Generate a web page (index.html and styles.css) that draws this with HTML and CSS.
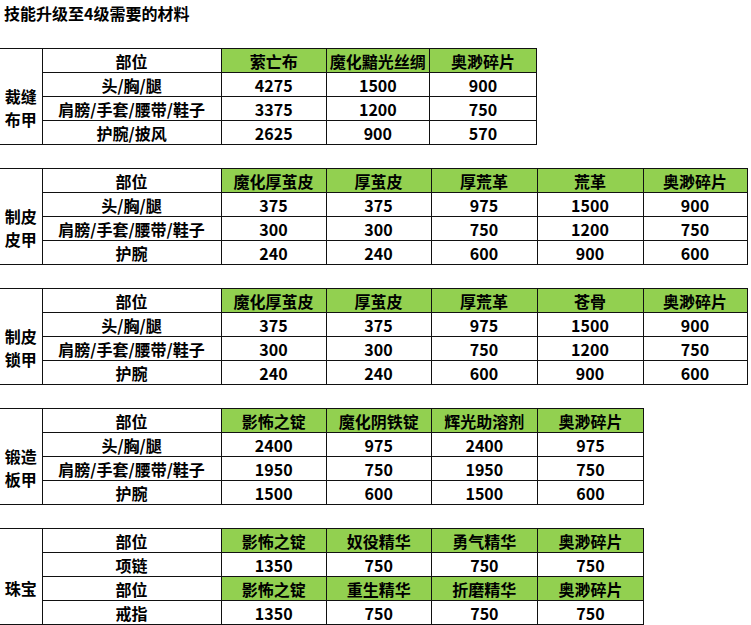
FILE: index.html
```html
<!DOCTYPE html>
<html lang="zh">
<head>
<meta charset="utf-8">
<title>技能升级至4级需要的材料</title>
<link rel="stylesheet" href="styles.css">
</head>
<body>
<div class="sheet">
  <div class="title">技能升级至4级需要的材料</div>

  <table class="grid w3">
    <colgroup><col class="c-lab"><col class="c-part"><col class="c-a"><col class="c-b"><col class="c-c"></colgroup>
    <tr><td class="corner"></td><th>部位</th><th class="mat">萦亡布</th><th class="mat">魔化黯光丝绸</th><th class="mat">奥渺碎片</th></tr>
    <tr><td class="lab" rowspan="3">裁缝<br>布甲</td><td>头/胸/腿</td><td>4275</td><td>1500</td><td>900</td></tr>
    <tr><td>肩膀/手套/腰带/鞋子</td><td>3375</td><td>1200</td><td>750</td></tr>
    <tr><td>护腕/披风</td><td>2625</td><td>900</td><td>570</td></tr>
  </table>

  <table class="grid w5">
    <colgroup><col class="c-lab"><col class="c-part"><col class="c-m"><col class="c-m"><col class="c-m2"><col class="c-m2"><col class="c-last"></colgroup>
    <tr><td class="corner"></td><th>部位</th><th class="mat">魔化厚茧皮</th><th class="mat">厚茧皮</th><th class="mat">厚荒革</th><th class="mat">荒革</th><th class="mat">奥渺碎片</th></tr>
    <tr><td class="lab" rowspan="3">制皮<br>皮甲</td><td>头/胸/腿</td><td>375</td><td>375</td><td>975</td><td>1500</td><td>900</td></tr>
    <tr><td>肩膀/手套/腰带/鞋子</td><td>300</td><td>300</td><td>750</td><td>1200</td><td>750</td></tr>
    <tr><td>护腕</td><td>240</td><td>240</td><td>600</td><td>900</td><td>600</td></tr>
  </table>

  <table class="grid w5">
    <colgroup><col class="c-lab"><col class="c-part"><col class="c-m"><col class="c-m"><col class="c-m2"><col class="c-m2"><col class="c-last"></colgroup>
    <tr><td class="corner"></td><th>部位</th><th class="mat">魔化厚茧皮</th><th class="mat">厚茧皮</th><th class="mat">厚荒革</th><th class="mat">苍骨</th><th class="mat">奥渺碎片</th></tr>
    <tr><td class="lab" rowspan="3">制皮<br>锁甲</td><td>头/胸/腿</td><td>375</td><td>375</td><td>975</td><td>1500</td><td>900</td></tr>
    <tr><td>肩膀/手套/腰带/鞋子</td><td>300</td><td>300</td><td>750</td><td>1200</td><td>750</td></tr>
    <tr><td>护腕</td><td>240</td><td>240</td><td>600</td><td>900</td><td>600</td></tr>
  </table>

  <table class="grid w4">
    <colgroup><col class="c-lab"><col class="c-part"><col class="c-m"><col class="c-m"><col class="c-m2"><col class="c-m2"></colgroup>
    <tr><td class="corner"></td><th>部位</th><th class="mat">影怖之锭</th><th class="mat">魔化阴铁锭</th><th class="mat">辉光助溶剂</th><th class="mat">奥渺碎片</th></tr>
    <tr><td class="lab" rowspan="3">锻造<br>板甲</td><td>头/胸/腿</td><td>2400</td><td>975</td><td>2400</td><td>975</td></tr>
    <tr><td>肩膀/手套/腰带/鞋子</td><td>1950</td><td>750</td><td>1950</td><td>750</td></tr>
    <tr><td>护腕</td><td>1500</td><td>600</td><td>1500</td><td>600</td></tr>
  </table>

  <table class="grid w4">
    <colgroup><col class="c-lab"><col class="c-part"><col class="c-m"><col class="c-m"><col class="c-m2"><col class="c-m2"></colgroup>
    <tr><td class="corner"></td><th>部位</th><th class="mat">影怖之锭</th><th class="mat">奴役精华</th><th class="mat">勇气精华</th><th class="mat">奥渺碎片</th></tr>
    <tr><td class="lab" rowspan="3">珠宝</td><td>项链</td><td>1350</td><td>750</td><td>750</td><td>750</td></tr>
    <tr><th>部位</th><th class="mat">影怖之锭</th><th class="mat">重生精华</th><th class="mat">折磨精华</th><th class="mat">奥渺碎片</th></tr>
    <tr><td>戒指</td><td>1350</td><td>750</td><td>750</td><td>750</td></tr>
  </table>
</div>
</body>
</html>
```

FILE: styles.css
```css
html, body {
  margin: 0;
  padding: 0;
  background: #ffffff;
}

.sheet {
  display: flex;
  flex-direction: column;
  font-family: "Noto Sans CJK SC", "Microsoft YaHei", sans-serif;
  font-weight: 700;
  font-size: 16px;
  color: #000000;
}

.title {
  height: 24px;
  line-height: 24px;
  padding-left: 4px;
  margin-top: 1px;
}

.grid {
  border-collapse: collapse;
  table-layout: fixed;
  margin-top: 23px;
}

.w3 { width: 537px; }
.w5 { width: 747px; }
.w4 { width: 644px; }

.c-lab { width: 42px; }
.c-part { width: 179px; }
.c-a { width: 105px; }
.c-b { width: 103px; }
.c-c { width: 107px; }
.c-m { width: 105px; }
.c-m2 { width: 106px; }
.c-last { width: 104px; }

.grid td,
.grid th {
  height: 23px;
  padding: 0;
  border: 1px solid #111111;
  text-align: center;
  vertical-align: middle;
  line-height: 22px;
  font-weight: 700;
  white-space: nowrap;
  overflow: hidden;
}

.grid .mat {
  background: #92d050;
}

.grid .corner {
  border-left: hidden;
  border-bottom: none;
}

.grid .lab {
  border-left: hidden;
  border-top: hidden;
  line-height: 23px;
}
```
